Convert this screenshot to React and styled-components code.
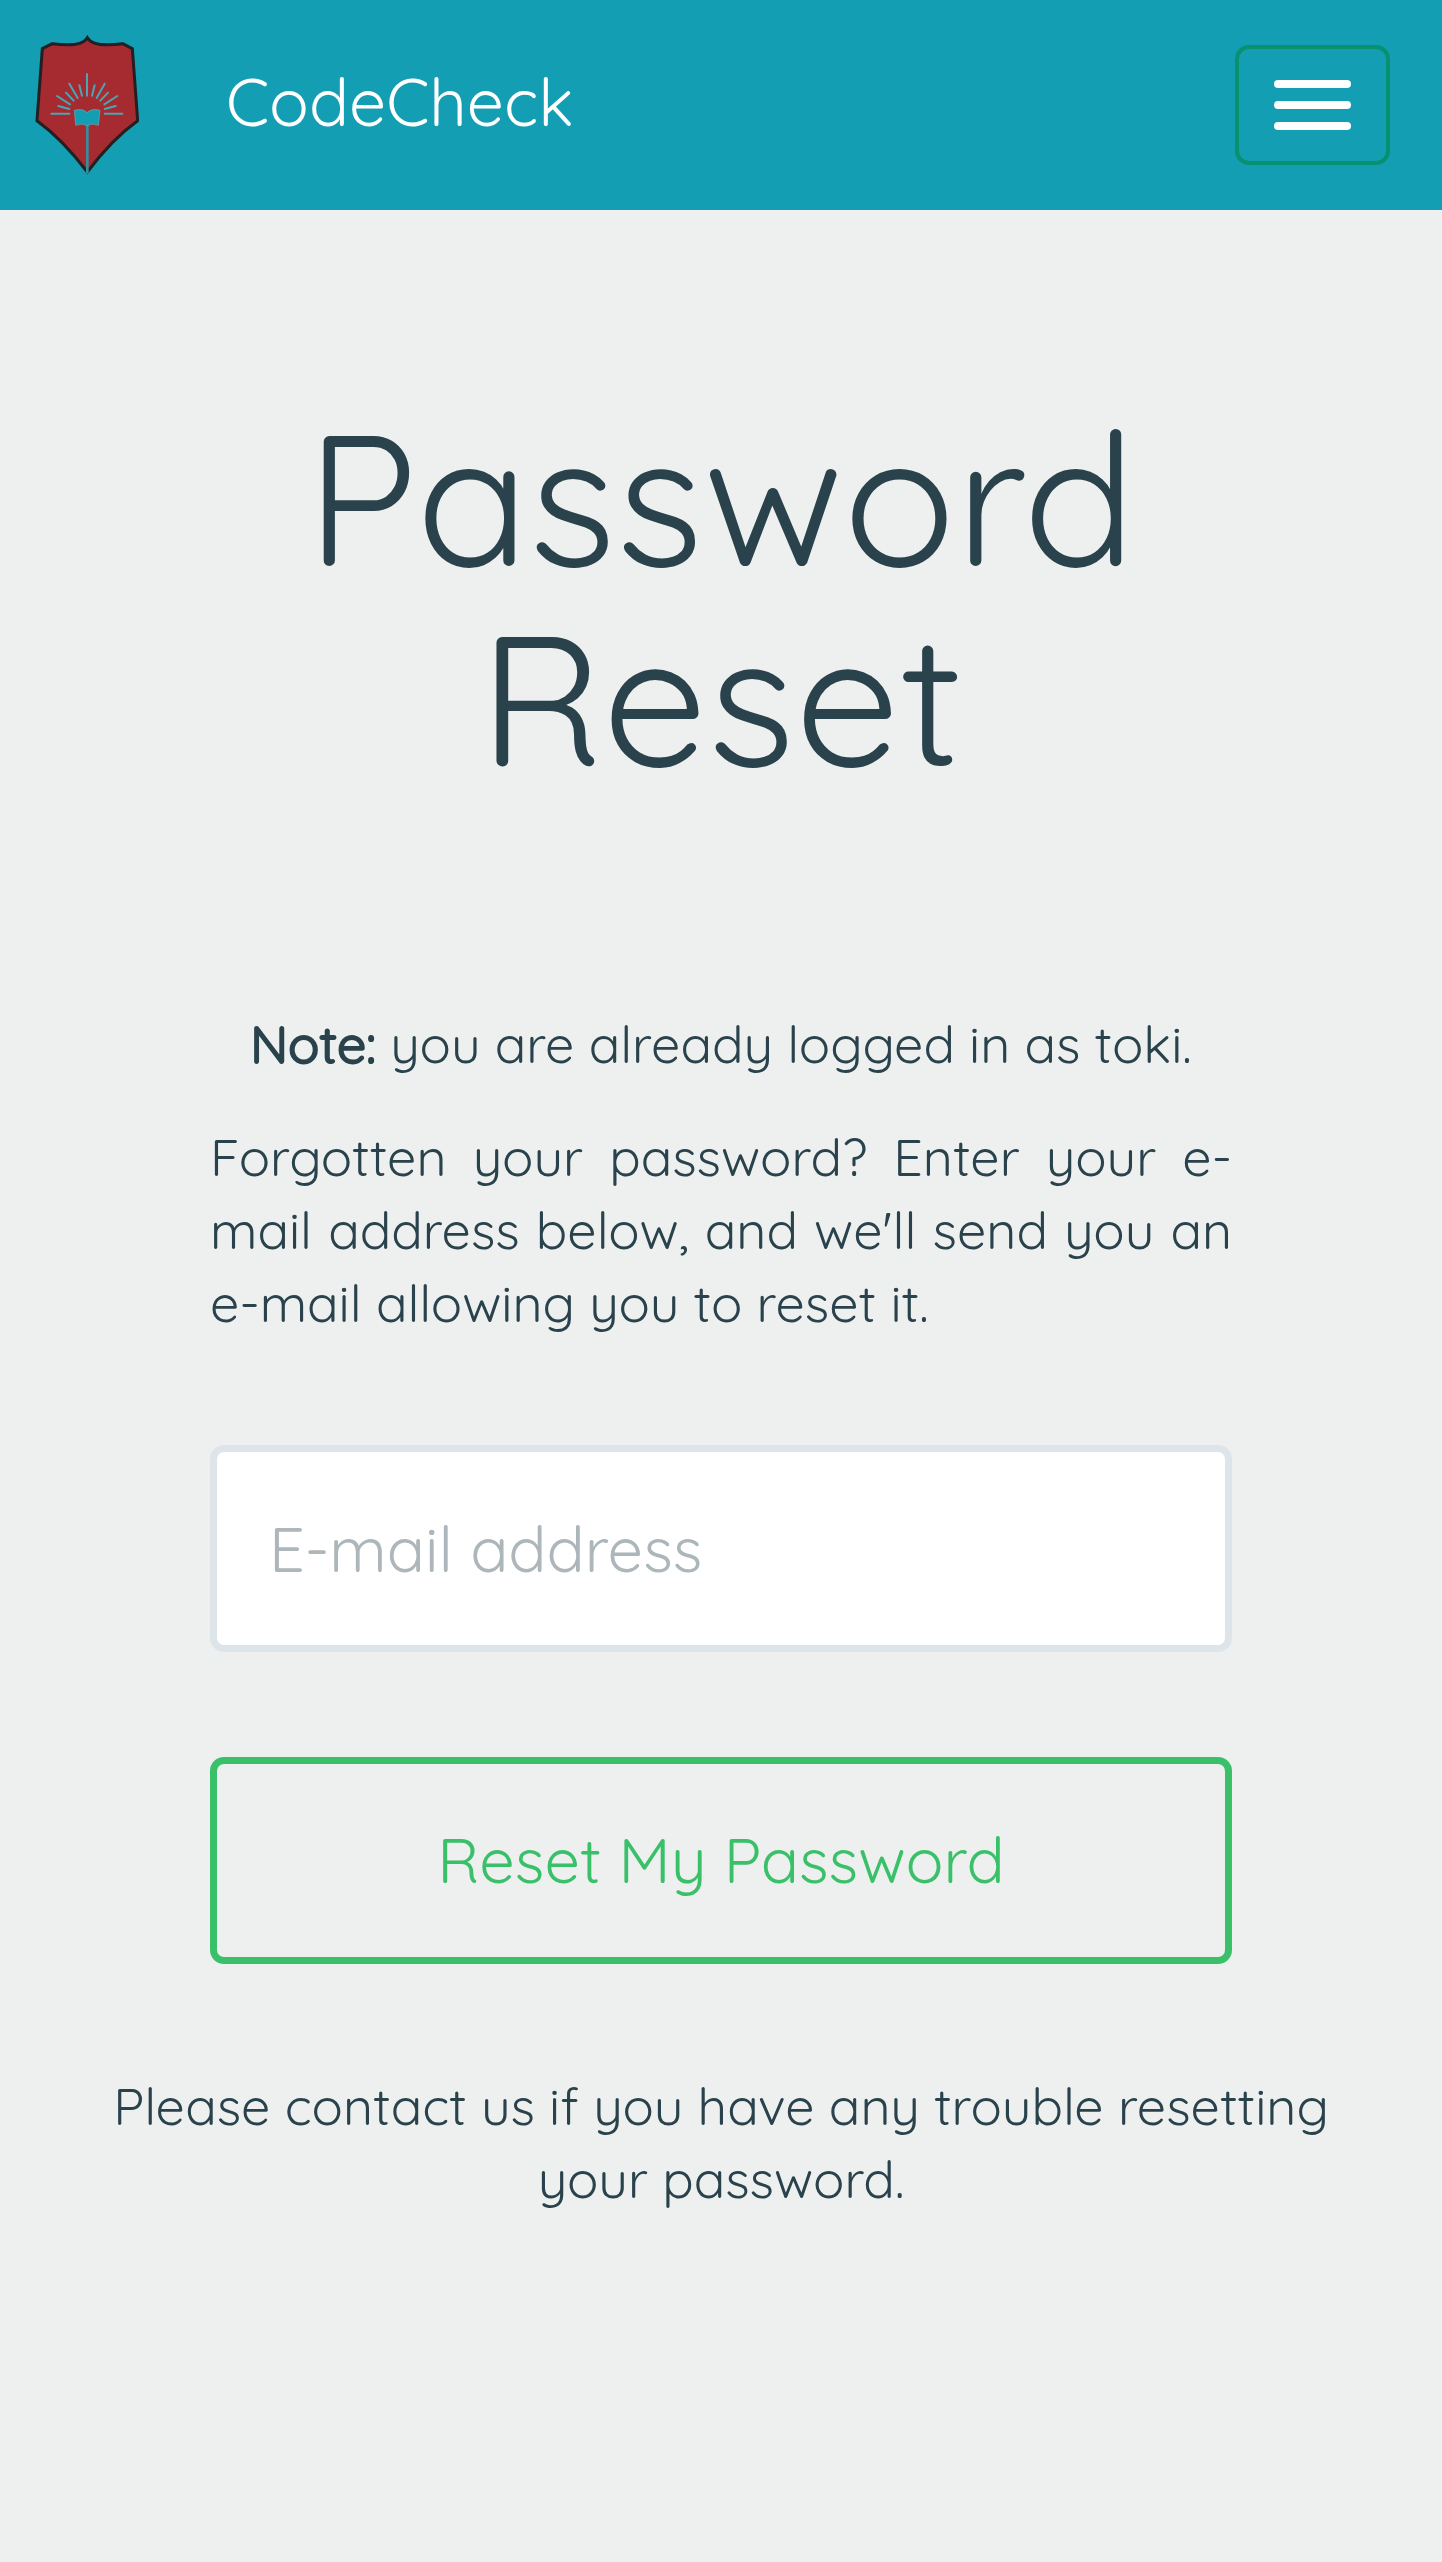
import React from "react";
import styled, { createGlobalStyle } from "styled-components";

const GlobalStyle = createGlobalStyle`
  *, *::before, *::after { box-sizing: border-box; }
  body {
    margin: 0;
    background: #edf0ef;
    color: #2a424c;
    font-family: Quicksand, Lato, "Open Sans", sans-serif;
    font-size: 52px;
    font-weight: 400;
    line-height: 73px;
  }
`;

const Navbar = styled.nav`
  display: flex;
  align-items: center;
  justify-content: space-between;
  height: 210px;
  padding: 0 52px 0 35px;
  background: #149eb4;
`;

const Brand = styled.a`
  display: flex;
  align-items: center;
  gap: 87px;
  color: #fff;
  font-size: 66px;
  line-height: 84px;
  text-decoration: none;
`;

const BrandName = styled.span`
  padding-bottom: 6px;
`;

const Logo = styled.svg`
  width: 104px;
  height: 140px;
`;

const Toggler = styled.button`
  display: flex;
  flex-direction: column;
  align-items: center;
  justify-content: center;
  gap: 13px;
  width: 155px;
  height: 120px;
  padding: 0;
  background: transparent;
  border: 4px solid #07916f;
  border-radius: 14px;
`;

const Bar = styled.span`
  width: 77px;
  height: 8px;
  border-radius: 4px;
  background: #fff;
`;

const Main = styled.main`
  padding: 187px 70px 140px;
  text-align: center;
`;

const Title = styled.h1`
  max-width: 1022px;
  margin: 0 auto 210px;
  font-size: 186px;
  font-weight: 400;
  line-height: 200px;
`;

const Form = styled.form`
  display: flex;
  flex-direction: column;
  max-width: 1022px;
  margin: 0 auto;
`;

const Note = styled.p`
  margin: 0 0 40px;
`;

const Strong = styled.strong`
  font-weight: 400;
  -webkit-text-stroke: 2px currentColor;
`;

const Intro = styled.p`
  margin: 0 0 106px;
  text-align: justify;
`;

const EmailInput = styled.input`
  width: 100%;
  height: 207px;
  margin-bottom: 105px;
  padding: 0 52px;
  border: 7px solid #dde4ea;
  border-radius: 14px;
  background: #fff;
  color: inherit;
  font: inherit;
  font-size: 63px;
  &::placeholder { color: #adb6ba; opacity: 1; }
`;

const SubmitButton = styled.button`
  height: 207px;
  margin-bottom: 105px;
  padding: 0 0 2px;
  border: 7px solid #3bc06a;
  border-radius: 14px;
  background: transparent;
  color: #3bc06a;
  font: inherit;
  font-size: 63px;
`;

const Contact = styled.p`
  margin: 0;
`;

const rays = [
  "M261 222V287", "M238 256L246 287", "M284 256L276 287",
  "M208 251L233 294", "M314 251L290 294", "M198 278L221 302",
  "M324 278L301 302", "M171 288L210 313", "M352 288L313 313",
  "M175 318L208 327", "M347 318L314 327", "M154 341H208", "M314 341H367",
];

function Crest() {
  return (
    <Logo viewBox="105 105 312 420" aria-hidden="true">
      <path
        d="M127 146L157 131Q245 143 262 113Q279 143 368 131L397 146L413 362Q335 418 262 516Q188 418 111 362Z"
        fill="#a52b30"
        stroke="#241f20"
        strokeWidth="9"
      />
      <g fill="none" stroke="#4ba5b2" strokeWidth="6" strokeLinecap="round">
        {rays.map((d) => <path key={d} d={d} />)}
      </g>
      <path d="M262 374V521" stroke="#368d9b" strokeWidth="8" />
      <path
        d="M223 331Q248 324 261 338Q275 324 300 331L295 376Q275 368 261 377Q247 368 227 376Z"
        fill="#149eb4"
        stroke="#65adb5"
        strokeWidth="2"
      />
    </Logo>
  );
}

export default function App() {
  return (
    <>
      <GlobalStyle />
      <Navbar>
        <Brand href="#"><Crest /><BrandName>CodeCheck</BrandName></Brand>
        <Toggler type="button" aria-label="Toggle navigation">
          <Bar /><Bar /><Bar />
        </Toggler>
      </Navbar>
      <Main>
        <Title>Password Reset</Title>
        <Form onSubmit={(e) => e.preventDefault()}>
          <Note><Strong>Note:</Strong> you are already logged in as toki.</Note>
          <Intro>
            Forgotten your password? Enter your e-mail address below, and we'll
            send you an e-mail allowing you to reset it.
          </Intro>
          <EmailInput type="email" aria-label="E-mail address" placeholder="E-mail address" />
          <SubmitButton type="submit">Reset My Password</SubmitButton>
        </Form>
        <Contact>Please contact us if you have any trouble resetting your password.</Contact>
      </Main>
    </>
  );
}
